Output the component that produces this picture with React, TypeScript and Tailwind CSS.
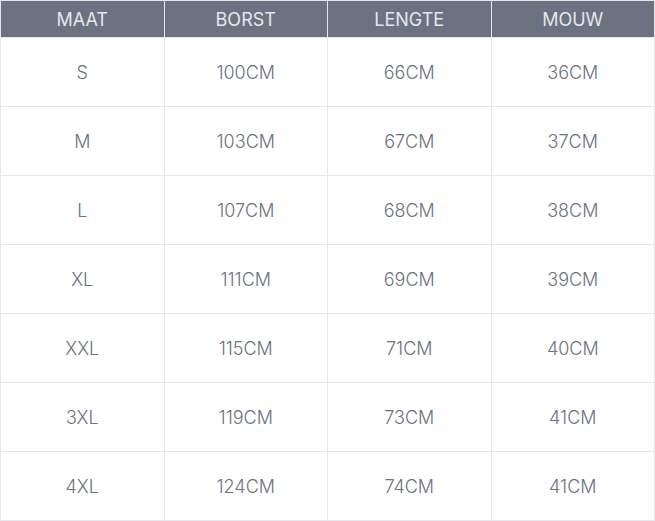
import React from 'react';

const headers = ['MAAT', 'BORST', 'LENGTE', 'MOUW'];

const rows: string[][] = [
  ['S', '100CM', '66CM', '36CM'],
  ['M', '103CM', '67CM', '37CM'],
  ['L', '107CM', '68CM', '38CM'],
  ['XL', '111CM', '69CM', '39CM'],
  ['XXL', '115CM', '71CM', '40CM'],
  ['3XL', '119CM', '73CM', '41CM'],
  ['4XL', '124CM', '74CM', '41CM'],
];

const App: React.FC = () => {
  return (
    <div className="w-[655px] bg-white font-['Inter',sans-serif]">
      <table className="w-full table-fixed border-collapse text-center text-[18px]">
        <thead>
          <tr className="bg-[#6b7280]">
            {headers.map((h) => (
              <th
                key={h}
                className="h-[37px] border border-[#e5e7eb] p-0 font-normal text-[#e5e7eb]"
              >
                {h}
              </th>
            ))}
          </tr>
        </thead>
        <tbody>
          {rows.map((row) => (
            <tr key={row[0]}>
              {row.map((cell, i) => (
                <td
                  key={i}
                  className="h-[69px] border border-[#e5e7eb] p-0 font-[350] text-[#6b7280]"
                >
                  {cell}
                </td>
              ))}
            </tr>
          ))}
        </tbody>
      </table>
    </div>
  );
};

export default App;
